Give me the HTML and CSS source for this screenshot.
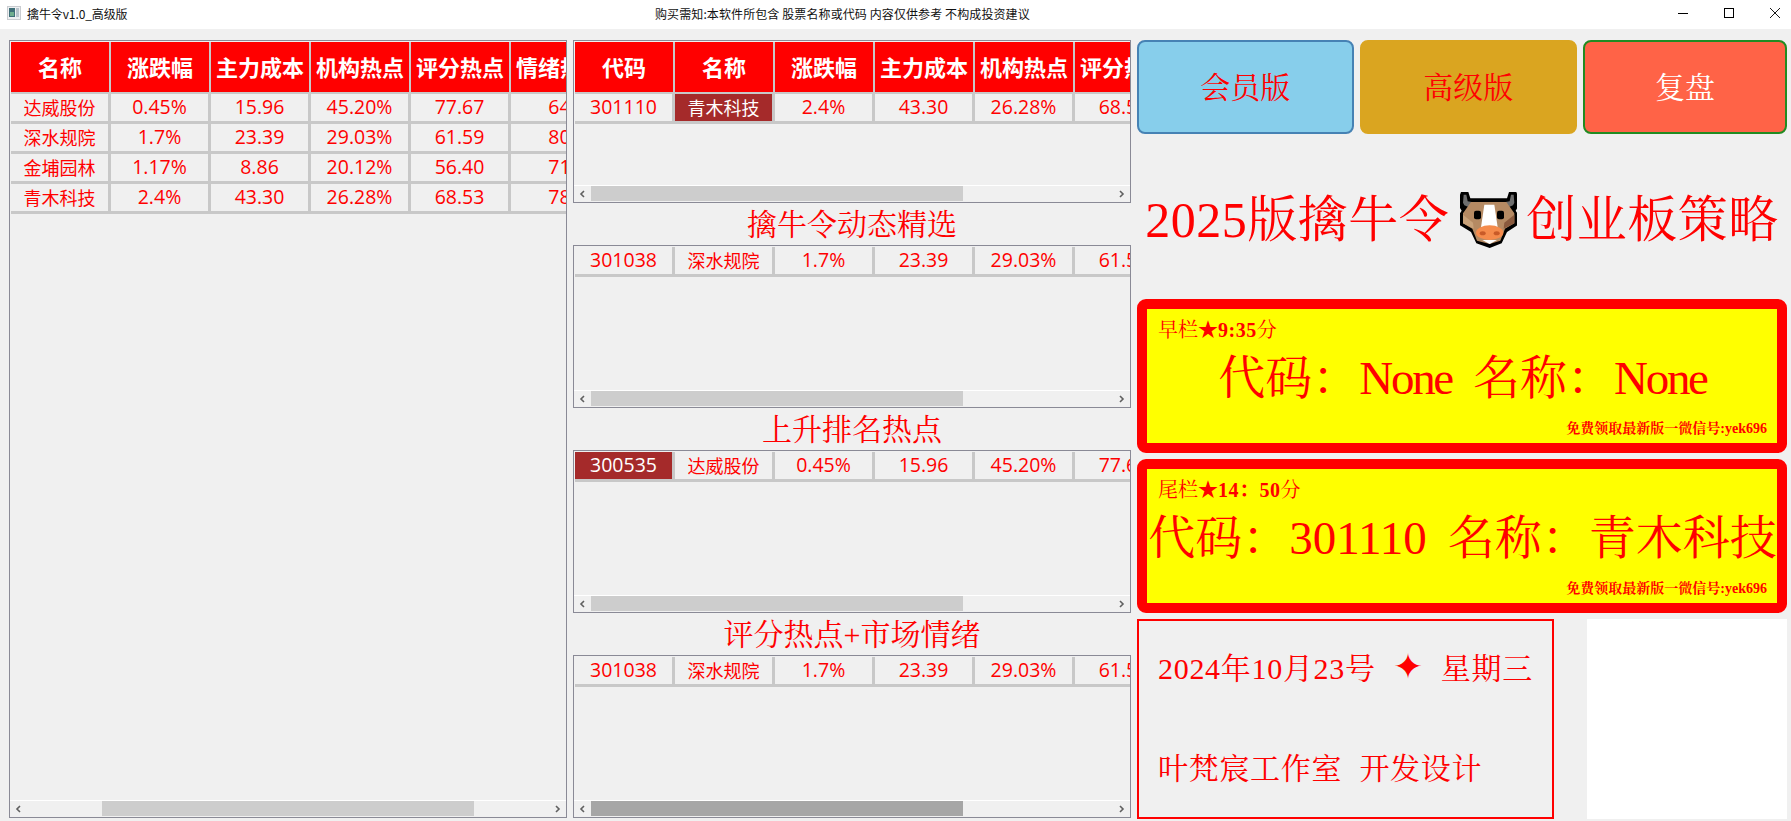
FILE: index.html
```html
<!DOCTYPE html>
<html lang="zh-CN">
<head>
<meta charset="utf-8">
<title>擒牛令v1.0_高级版</title>
<link rel="stylesheet" href="styles.css">
</head>
<body>
<header class="titlebar">
  <svg class="app-icon" viewBox="0 0 14 14" width="14" height="14"><rect x="0" y="0" width="14" height="14" fill="#c9ccd0"/><rect x="1" y="1" width="12" height="12" fill="#eef0f2"/><rect x="2" y="2" width="6" height="9" fill="#3f6f78"/><rect x="3" y="6" width="4" height="4" fill="#6fae8e"/><rect x="9" y="2" width="3" height="9" fill="#b9c4cc"/></svg>
  <span class="app-title">擒牛令v1.0_高级版</span>
  <span class="notice">购买需知:本软件所包含 股票名称或代码 内容仅供参考 不构成投资建议</span>
  <div class="win-btns">
    <svg viewBox="0 0 10 10" width="10" height="10"><path d="M0 5.5H10" stroke="#000" fill="none"/></svg>
    <svg viewBox="0 0 10 10" width="10" height="10"><rect x=".5" y=".5" width="9" height="9" stroke="#000" fill="none"/></svg>
    <svg viewBox="0 0 10 10" width="10" height="10"><path d="M0 0L10 10M10 0L0 10" stroke="#000" fill="none" stroke-width=".9"/></svg>
  </div>
</header>
<main class="main">
  <section class="table tall">
    <div class="viewport">
      <div class="row head"><div>名称</div><div>涨跌幅</div><div>主力成本</div><div>机构热点</div><div>评分热点</div><div>情绪热点</div></div>
      <div class="row"><div>达威股份</div><div class="n">0.45%</div><div class="n">15.96</div><div class="n">45.20%</div><div class="n">77.67</div><div class="n">64</div></div>
      <div class="row"><div>深水规院</div><div class="n">1.7%</div><div class="n">23.39</div><div class="n">29.03%</div><div class="n">61.59</div><div class="n">80</div></div>
      <div class="row"><div>金埔园林</div><div class="n">1.17%</div><div class="n">8.86</div><div class="n">20.12%</div><div class="n">56.40</div><div class="n">71</div></div>
      <div class="row"><div>青木科技</div><div class="n">2.4%</div><div class="n">43.30</div><div class="n">26.28%</div><div class="n">68.53</div><div class="n">78</div></div>
    </div>
    <div class="scrollbar">
      <svg class="arrow" viewBox="0 0 6 8" width="6" height="8"><path d="M4.5 1L1.5 4L4.5 7" stroke="#606060" stroke-width="1.6" fill="none"/></svg>
      <div class="track"><div class="thumb shifted"></div></div>
      <svg class="arrow" viewBox="0 0 6 8" width="6" height="8"><path d="M1.5 1L4.5 4L1.5 7" stroke="#606060" stroke-width="1.6" fill="none"/></svg>
    </div>
  </section>

  <div class="middle">
    <section class="table">
      <div class="viewport">
        <div class="row head"><div>代码</div><div>名称</div><div>涨跌幅</div><div>主力成本</div><div>机构热点</div><div>评分热点</div></div>
        <div class="row"><div class="n">301110</div><div class="sel">青木科技</div><div class="n">2.4%</div><div class="n">43.30</div><div class="n">26.28%</div><div class="n">68.53</div></div>
      </div>
      <div class="scrollbar">
        <svg class="arrow" viewBox="0 0 6 8" width="6" height="8"><path d="M4.5 1L1.5 4L4.5 7" stroke="#606060" stroke-width="1.6" fill="none"/></svg>
        <div class="track"><div class="thumb"></div></div>
        <svg class="arrow" viewBox="0 0 6 8" width="6" height="8"><path d="M1.5 1L4.5 4L1.5 7" stroke="#606060" stroke-width="1.6" fill="none"/></svg>
      </div>
    </section>
    <h2 class="label">擒牛令动态精选</h2>
    <section class="table">
      <div class="viewport">
        <div class="row"><div class="n">301038</div><div>深水规院</div><div class="n">1.7%</div><div class="n">23.39</div><div class="n">29.03%</div><div class="n">61.59</div></div>
      </div>
      <div class="scrollbar">
        <svg class="arrow" viewBox="0 0 6 8" width="6" height="8"><path d="M4.5 1L1.5 4L4.5 7" stroke="#606060" stroke-width="1.6" fill="none"/></svg>
        <div class="track"><div class="thumb"></div></div>
        <svg class="arrow" viewBox="0 0 6 8" width="6" height="8"><path d="M1.5 1L4.5 4L1.5 7" stroke="#606060" stroke-width="1.6" fill="none"/></svg>
      </div>
    </section>
    <h2 class="label">上升排名热点</h2>
    <section class="table">
      <div class="viewport">
        <div class="row"><div class="n sel">300535</div><div>达威股份</div><div class="n">0.45%</div><div class="n">15.96</div><div class="n">45.20%</div><div class="n">77.67</div></div>
      </div>
      <div class="scrollbar">
        <svg class="arrow" viewBox="0 0 6 8" width="6" height="8"><path d="M4.5 1L1.5 4L4.5 7" stroke="#606060" stroke-width="1.6" fill="none"/></svg>
        <div class="track"><div class="thumb"></div></div>
        <svg class="arrow" viewBox="0 0 6 8" width="6" height="8"><path d="M1.5 1L4.5 4L1.5 7" stroke="#606060" stroke-width="1.6" fill="none"/></svg>
      </div>
    </section>
    <h2 class="label">评分热点+市场情绪</h2>
    <section class="table">
      <div class="viewport">
        <div class="row"><div class="n">301038</div><div>深水规院</div><div class="n">1.7%</div><div class="n">23.39</div><div class="n">29.03%</div><div class="n">61.59</div></div>
      </div>
      <div class="scrollbar">
        <svg class="arrow" viewBox="0 0 6 8" width="6" height="8"><path d="M4.5 1L1.5 4L4.5 7" stroke="#606060" stroke-width="1.6" fill="none"/></svg>
        <div class="track"><div class="thumb hover"></div></div>
        <svg class="arrow" viewBox="0 0 6 8" width="6" height="8"><path d="M1.5 1L4.5 4L1.5 7" stroke="#606060" stroke-width="1.6" fill="none"/></svg>
      </div>
    </section>
  </div>

  <div class="right">
    <div class="buttons">
      <button class="btn blue">会员版</button>
      <button class="btn gold">高级版</button>
      <button class="btn tomato">复盘</button>
    </div>
    <h1 class="headline">2025版擒牛令<svg class="cow" viewBox="57 33 171 171" width="57" height="57">
      <path d="M60 36H82L88 55H198L204 36H226L229 44V84L224 92L229 100V136L198 156L182 190L146 204L106 190L90 156L57 136V100L62 92L57 84V44Z" fill="#000"/>
      <path d="M68 44H76L80 64L104 68L84 82L70 76L66 68Z" fill="#6e6e6e"/>
      <path d="M218 44H210L206 64L182 68L202 82L216 76L220 68Z" fill="#6e6e6e"/>
      <path d="M90 66H196L220 100V130L192 146L178 182L146 192L108 182L94 146L66 130V100Z" fill="#b58a63"/>
      <path d="M66 104L96 128L98 146L66 130Z" fill="#c9a27a"/>
      <path d="M220 104L190 128L188 146L220 130Z" fill="#8a5a3e"/>
      <path d="M130 74H160L170 142H120Z" fill="#fff"/>
      <rect x="99" y="92" width="21" height="26" rx="6" fill="#000"/>
      <rect x="168" y="92" width="21" height="26" rx="6" fill="#000"/>
      <path d="M124 180H168L146 192Z" fill="#fff"/>
      <ellipse cx="146" cy="158" rx="41" ry="22" fill="#f58b4c"/>
      <ellipse cx="125" cy="160" rx="9" ry="6" fill="#c85a28"/>
      <ellipse cx="167" cy="160" rx="9" ry="6" fill="#c85a28"/>
    </svg>创业板策略</h1>
    <article class="signal">
      <p class="slot">早栏<span class="star">★</span><b>9:35</b>分</p>
      <p class="pick">代码：<span class="latin">None</span> 名称：<span class="latin">None</span></p>
      <p class="promo">免费领取最新版一微信号:yek696</p>
    </article>
    <article class="signal">
      <p class="slot">尾栏<span class="star">★</span><b>14：50</b>分</p>
      <p class="pick">代码：301110 名称：青木科技</p>
      <p class="promo">免费领取最新版一微信号:yek696</p>
    </article>
    <div class="bottom">
      <div class="date-box">
        <p>2024年10月23号 <span class="diamond">✦</span> 星期三</p>
        <p>叶梵宸工作室 开发设计</p>
      </div>
      <div class="qr"></div>
    </div>
  </div>
</main>
</body>
</html>
```
FILE: styles.css
```css
* { box-sizing: border-box; }
html, body { margin: 0; height: 100%; }
body {
  width: 1791px;
  height: 821px;
  overflow: hidden;
  background: #f0f0f0;
  font-family: "Noto Sans CJK SC", "Open Sans", sans-serif;
  display: flex;
  flex-direction: column;
}
.titlebar {
  height: 29px;
  flex: none;
  background: #fff;
  display: flex;
  align-items: center;
  font-size: 12px;
  color: #111;
  position: relative;
  padding-left: 7px;
}
.app-icon { margin-right: 6px; margin-bottom: 3px; }
.app-title { width: 101px; white-space: nowrap; margin-bottom: 3px; letter-spacing: -.1px; }
.notice { margin-left: 527px; white-space: nowrap; margin-bottom: 3px; letter-spacing: .1px; }
.win-btns {
  position: absolute;
  right: 11px;
  top: 8px;
  display: flex;
  gap: 36px;
}
.win-btns svg { display: block; }

.main {
  flex: 1;
  display: flex;
  gap: 6px;
  padding: 11px 4px 3px 9px;
  min-height: 0;
}
.table {
  width: 558px;
  height: 163px;
  flex: none;
  border: 1px solid #8a8a96;
  display: flex;
  flex-direction: column;
}
.table.tall { height: 778px; }
.viewport {
  flex: 1;
  overflow: hidden;
  padding: 1px 0 0 1px;
  min-height: 0;
}
.row {
  display: flex;
  width: 600px;
}
.row > div {
  width: 100px;
  flex: none;
  height: 30px;
  line-height: 26px;
  text-align: center;
  font-size: 18px;
  color: #f00;
  border-right: 3px solid #c8c8c8;
  border-bottom: 3px solid #c8c8c8;
  white-space: nowrap;
  overflow: visible;
}
.row > .n { font-family: "Open Sans", "Noto Sans CJK SC", sans-serif; font-size: 19.5px; }
.row.head > div {
  height: 52px;
  line-height: 48px;
  font-size: 22px;
  font-weight: 700;
  color: #fff;
  background: #f00;
  border-right-width: 2px;
  border-bottom-width: 2px;
}
.row > .sel { background: #a52a2a; color: #fff; background-clip: padding-box; }
.scrollbar {
  height: 17px;
  flex: none;
  border-top: 1px solid #fff;
  display: flex;
  align-items: flex-start;
}
.arrow { flex: none; width: 17px; height: 8px; margin-top: 4px; }
.track { flex: 1; height: 15px; }
.thumb { width: 372px; height: 15px; background: #cdcdcd; }
.thumb.shifted { margin-left: 75px; }
.thumb.hover { background: #a6a6a6; }

.middle {
  width: 558px;
  flex: none;
  display: flex;
  flex-direction: column;
}
.label {
  height: 42px;
  margin: 0;
  text-align: center;
  font: 400 30px/44px "Liberation Serif", "Noto Serif CJK SC", "Noto Sans CJK SC", serif;
  color: #f00;
}

.right {
  width: 650px;
  flex: none;
  display: flex;
  flex-direction: column;
  font-family: "Liberation Serif", "Noto Serif CJK SC", "Noto Sans CJK SC", serif;
  color: #f00;
}
.buttons { display: flex; gap: 6.5px; height: 94px; flex: none; }
.btn {
  width: 216.5px;
  height: 94px;
  border-radius: 8px;
  font: 400 30px "Liberation Serif", "Noto Serif CJK SC", "Noto Sans CJK SC", serif;
  color: #f00;
  border: 2px solid transparent;
  padding: 0 0 4px;
}
.btn.blue { background: #87ceeb; border-color: #4682b4; }
.btn.gold { background: #daa520; border-color: #daa520; }
.btn.tomato { background: #ff6347; border-color: #228b22; color: #fff; width: 204px; }

.headline {
  height: 165px;
  flex: none;
  margin: 0;
  padding: 0 0 4px;
  display: flex;
  align-items: center;
  justify-content: center;
  font-size: 50px;
  font-weight: 400;
  letter-spacing: .5px;
  white-space: nowrap;
}
.cow { margin: 10px 9px 0 11px; flex: none; }

.signal {
  height: 154px;
  flex: none;
  margin-bottom: 5.5px;
  background: #ff0;
  border: 10px solid #f00;
  border-radius: 9px;
  padding: 9px 10px 0 11px;
  display: flex;
  flex-direction: column;
  position: relative;
}
.signal p { margin: 0; }
.slot { font-size: 20px; line-height: 24px; font-weight: 400; }
.slot b { letter-spacing: .5px; }
.pick {
  text-align: center;
  font-size: 47px;
  line-height: 56px;
  margin: 8px -21px 0 -21px !important;
  word-spacing: .2em;
  white-space: nowrap;
}
.latin { letter-spacing: -2.3px; }
.promo {
  position: absolute;
  right: 10px;
  bottom: 5px;
  font-size: 14px;
  line-height: 18px;
  font-weight: 700;
}
.bottom { display: flex; justify-content: space-between; height: 200px; flex: none; margin-top: .5px; }
.date-box {
  width: 417px;
  height: 200px;
  border: 2px solid #f00;
  padding: 0 0 0 19px;
  font-size: 30px;
  letter-spacing: .7px;
  word-spacing: 9px;
  display: flex;
  flex-direction: column;
  justify-content: space-between;
}
.date-box p { margin: 0; white-space: nowrap; line-height: 40px; }
.date-box p:first-child { margin-top: 28px; }
.date-box p:last-child { margin-bottom: 28px; }
.diamond { font-size: 36px; line-height: 30px; }
.qr { width: 200px; height: 200px; background: #fff; }
```
